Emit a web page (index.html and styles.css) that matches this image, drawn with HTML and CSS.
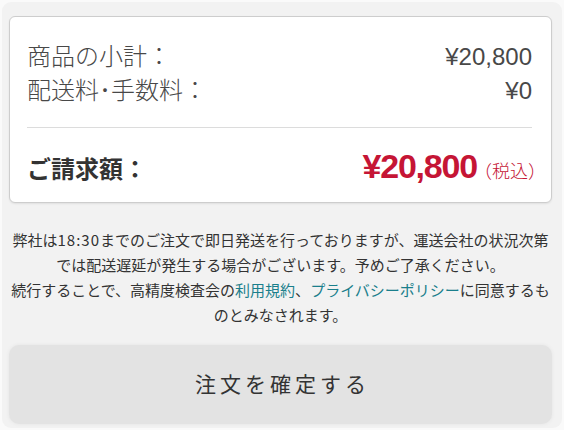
FILE: index.html
```html
<!DOCTYPE html>
<html lang="ja">
<head>
<meta charset="utf-8">
<link rel="stylesheet" href="styles.css">
</head>
<body>
<div class="panel">
  <div class="card">
    <div class="rows">
      <div class="row"><span class="label">商品の小計：</span><span class="value">¥20,800</span></div>
      <div class="row"><span class="label">配送料･手数料：</span><span class="value">¥0</span></div>
    </div>
    <hr class="divider">
    <div class="row total">
      <span class="total-label">ご請求額：</span>
      <span class="total-value"><span class="amount">¥20,800</span><span class="tax">（税込）</span></span>
    </div>
  </div>
  <div class="notes">
    <p>弊社は<span class="time">18:30</span>までのご注文で即日発送を行っておりますが、運送会社の状況次第<br>では配送遅延が発生する場合がございます。予めご了承ください。</p>
    <p>続行することで、高精度検査会の<a href="#">利用規約</a>、<a href="#">プライバシーポリシー</a>に同意するも<br>のとみなされます。</p>
  </div>
  <button class="confirm" type="button">注文を確定する</button>
</div>
</body>
</html>
```
FILE: styles.css
```css
html, body {
  margin: 0;
  padding: 0;
}
body {
  width: 564px;
  height: 430px;
  background: #fafafa;
  font-family: "Liberation Sans", "Noto Sans CJK JP", sans-serif;
  overflow: hidden;
}
.panel {
  margin: 2px;
  height: 426px;
  box-sizing: border-box;
  background: #f2f2f2;
  border-radius: 9px;
  padding: 14px 10px 0 7px;
}
.card {
  background: #fff;
  border: 1px solid #cdcdcd;
  border-radius: 6px;
  box-shadow: 0 1px 2px rgba(0,0,0,0.08);
  padding: 23px 19px 16px 17px;
}
.row {
  display: flex;
  justify-content: space-between;
  align-items: baseline;
}
.rows .row {
  height: 34px;
  line-height: 34px;
  font-size: 24px;
  color: #484848;
}
.label {
  font-weight: 300;
}
.divider {
  border: 0;
  border-top: 1px solid #dcdcdc;
  margin: 19px 0 0;
}
.total {
  margin-top: 18px;
  height: 40px;
  line-height: 40px;
}
.total-label {
  font-size: 24px;
  font-weight: bold;
  color: #333;
}
.total-value {
  color: #c51535;
  margin-right: -14px;
}
.amount {
  font-size: 34px;
  font-weight: bold;
  letter-spacing: -1.2px;
}
.tax {
  font-size: 18px;
  font-weight: 300;
  margin-left: -3px;
}
.notes {
  margin: 24px -8px 0;
  text-align: center;
  font-family: "Noto Sans CJK JP", sans-serif;
  font-size: 15px;
  line-height: 25px;
  color: #333;
  white-space: nowrap;
}
.notes p {
  margin: 0;
}
.time {
  letter-spacing: 1px;
}
.notes a {
  color: #1a7f8c;
  text-decoration: none;
}
.confirm {
  display: block;
  width: 100%;
  height: 79px;
  margin-top: 18px;
  border: 0;
  border-radius: 10px;
  background: #e3e3e3;
  box-shadow: 0 0 4px rgba(0,0,0,0.06);
  font-family: "Noto Sans CJK JP", sans-serif;
  font-size: 21px;
  font-weight: 400;
  letter-spacing: 4px;
  text-indent: 4px;
  color: #333;
  padding: 0 0 3px;
}
```
